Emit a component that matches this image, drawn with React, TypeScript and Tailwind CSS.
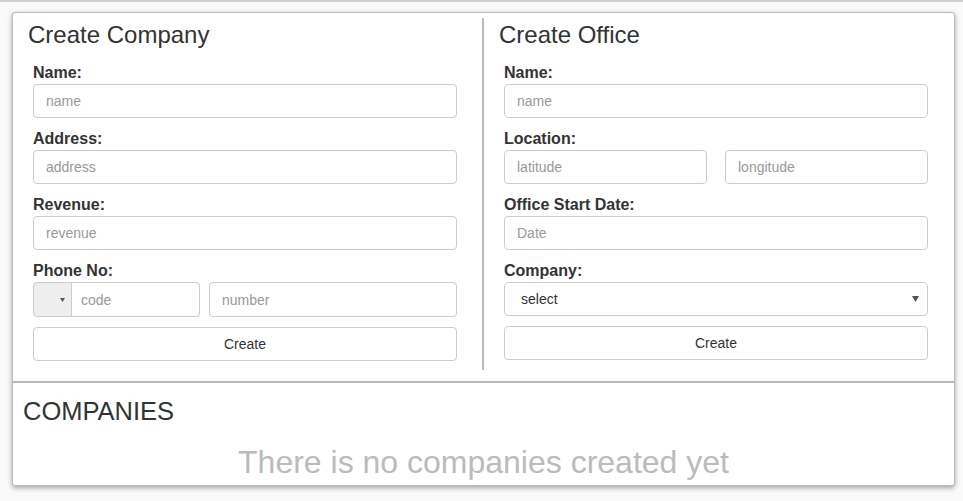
import React from "react";

const font = { fontFamily: '"Liberation Sans", Arial, Helvetica, sans-serif' };

function Label({ children }: { children: React.ReactNode }) {
  return <div className="h-[20px] leading-[22px] text-[16px] font-bold text-[#333] mb-[2px]">{children}</div>;
}

function Input({ placeholder, className = "" }: { placeholder: string; className?: string }) {
  return (
    <input
      placeholder={placeholder}
      className={`h-[34px] border border-[#ccc] rounded-[4px] px-[12px] text-[14px] text-[#555] placeholder:text-[#999] outline-none bg-white ${className}`}
      style={font}
    />
  );
}

function CreateButton() {
  return (
    <button
      className="w-[424px] h-[34px] border border-[#ccc] rounded-[4px] bg-white text-[14px] text-[#333] flex items-center justify-center"
      style={font}
    >
      Create
    </button>
  );
}

export default function App() {
  return (
    <div className="min-h-[501px] w-[963px] bg-[#fafafa] border-t-2 border-[#cfcfcf] pt-[10px] pl-[12px]" style={font}>
      <div className="w-[943px] h-[474px] bg-white border border-[#bbb] rounded-[3px] shadow-[0_2px_5px_rgba(0,0,0,0.35)] flex flex-col">
        {/* top row */}
        <div className="flex h-[370px] border-b-2 border-[#bbb]">
          {/* left panel */}
          <div className="w-[469px] pt-[9px]">
            <div className="pl-[15px] text-[24px] leading-[26px] text-[#333]">Create Company</div>
            <div className="pl-[20px] mt-[14px] flex flex-col">
              <Label>Name:</Label>
              <Input placeholder="name" className="w-[424px] mb-[10px]" />
              <Label>Address:</Label>
              <Input placeholder="address" className="w-[424px] mb-[10px]" />
              <Label>Revenue:</Label>
              <Input placeholder="revenue" className="w-[424px] mb-[10px]" />
              <Label>Phone No:</Label>
              <div className="flex w-[424px] h-[35px] mb-[10px]">
                <div className="flex w-[167px] h-[35px]">
                  <div className="w-[40px] h-[35px] bg-[#eee] border border-[#ccc] rounded-l-[4px] flex items-center justify-end pr-[6px]">
                    <svg width="5" height="4" viewBox="0 0 5 4"><path d="M0 0h5L2.5 4z" fill="#555" /></svg>
                  </div>
                  <input
                    placeholder="code"
                    className="w-[128px] h-[35px] border border-l-0 border-[#ccc] rounded-r-[4px] pl-[9px] text-[14px] placeholder:text-[#999] outline-none"
                    style={font}
                  />
                </div>
                <input
                  placeholder="number"
                  className="ml-[9px] w-[248px] h-[35px] border border-[#ccc] rounded-[4px] px-[12px] text-[14px] placeholder:text-[#999] outline-none"
                  style={font}
                />
              </div>
              <CreateButton />
            </div>
          </div>
          {/* divider */}
          <div className="w-[2px] h-[352px] mt-[5px] bg-[#bbb]" />
          {/* right panel */}
          <div className="flex-1 pt-[9px]">
            <div className="pl-[15px] text-[24px] leading-[26px] text-[#333]">Create Office</div>
            <div className="pl-[20px] mt-[14px] flex flex-col">
              <Label>Name:</Label>
              <Input placeholder="name" className="w-[424px] mb-[10px]" />
              <Label>Location:</Label>
              <div className="flex w-[424px] gap-[18px] mb-[10px]">
                <Input placeholder="latitude" className="w-[203px]" />
                <Input placeholder="longitude" className="w-[203px]" />
              </div>
              <Label>Office Start Date:</Label>
              <Input placeholder="Date" className="w-[424px] mb-[10px]" />
              <Label>Company:</Label>
              <div className="w-[424px] h-[34px] border border-[#ccc] rounded-[4px] flex items-center justify-between pl-[16px] pr-[8px] text-[14px] text-[#333] mb-[10px]">
                <span>select</span>
                <svg width="7" height="6" viewBox="0 0 7 6"><path d="M0 0h7L3.5 6z" fill="#555" /></svg>
              </div>
              <CreateButton />
            </div>
          </div>
        </div>
        {/* bottom */}
        <div className="pt-[14px] pl-[10px]">
          <div className="text-[25.5px] leading-[28px] text-[#333]">COMPANIES</div>
        </div>
        <div className="mt-[19px] text-center text-[32px] leading-[36px] text-[#bbb]">There is no companies created yet</div>
      </div>
    </div>
  );
}
